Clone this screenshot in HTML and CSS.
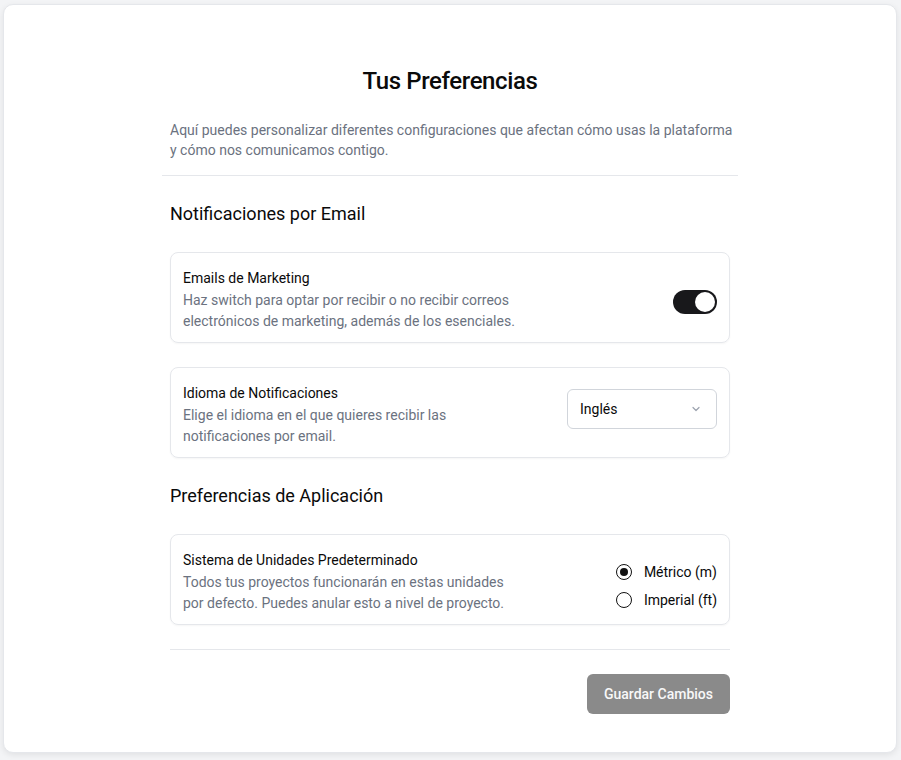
FILE: index.html
```html
<!DOCTYPE html>
<html lang="es">
<head>
<meta charset="utf-8">
<title>Tus Preferencias</title>
<link rel="stylesheet" href="styles.css">
</head>
<body>
<main class="panel">
  <header class="intro">
    <h1 class="title">Tus Preferencias</h1>
    <p class="lead">Aquí puedes personalizar diferentes configuraciones que afectan cómo usas la plataforma y cómo nos comunicamos contigo.</p>
  </header>
  <div class="content">
    <h2 class="section-title">Notificaciones por Email</h2>
    <div class="card">
      <div class="card-text">
        <div class="card-title">Emails de Marketing</div>
        <p class="card-desc">Haz switch para optar por recibir o no recibir correos electrónicos de marketing, además de los esenciales.</p>
      </div>
      <div class="toggle"><span class="knob"></span></div>
    </div>
    <div class="card">
      <div class="card-text">
        <div class="card-title">Idioma de Notificaciones</div>
        <p class="card-desc">Elige el idioma en el que quieres recibir las notificaciones por email.</p>
      </div>
      <div class="select">
        <span>Inglés</span>
        <svg class="chev" width="12" height="12" viewBox="0 0 12 12"><path d="M3 4.5 L6 7.5 L9 4.5" fill="none" stroke="#9ca3af" stroke-width="1.2" stroke-linecap="round" stroke-linejoin="round"/></svg>
      </div>
    </div>
    <h2 class="section-title">Preferencias de Aplicación</h2>
    <div class="card">
      <div class="card-text">
        <div class="card-title">Sistema de Unidades Predeterminado</div>
        <p class="card-desc">Todos tus proyectos funcionarán en estas unidades por defecto. Puedes anular esto a nivel de proyecto.</p>
      </div>
      <div class="radios">
        <div class="radio-row"><span class="radio checked"></span><span>Métrico (m)</span></div>
        <div class="radio-row"><span class="radio"></span><span>Imperial (ft)</span></div>
      </div>
    </div>
    <div class="actions">
      <button class="save">Guardar Cambios</button>
    </div>
  </div>
</main>
</body>
</html>
```
FILE: styles.css
```css
* { box-sizing: border-box; }
html, body { margin: 0; }
body {
  background: #f3f4f6;
  padding: 4px 4px 8px 3px;
  font-family: Roboto, "Liberation Sans", Arial, sans-serif;
  color: #111827;
}
.panel {
  background: #fff;
  border: 1px solid #e5e7eb;
  border-radius: 10px;
  box-shadow: 0 2px 6px rgba(0,0,0,0.08);
  padding: 60px 0 38px;
  min-height: 748px;
}
.intro {
  width: 576px;
  margin: 0 auto;
  border-bottom: 1px solid #e5e7eb;
  padding: 0 0 15px 8px;
}
.title {
  margin: 0;
  padding-right: 8px;
  text-align: center;
  font-size: 24px;
  line-height: 32px;
  font-weight: 500;
  letter-spacing: -0.4px;
  color: #0a0a0a;
}
.lead {
  margin: 23px 0 0;
  font-size: 14px;
  line-height: 20px;
  color: #6b7280;
}
.content {
  width: 560px;
  margin: 0 auto;
  display: flex;
  flex-direction: column;
  gap: 24px;
  padding-top: 24px;
}
.section-title {
  margin: 0;
  font-size: 18px;
  line-height: 28px;
  font-weight: 400;
  color: #0a0a0a;
}
.card {
  border: 1px solid #e5e7eb;
  border-radius: 8px;
  box-shadow: 0 1px 2px rgba(0,0,0,0.04);
  padding: 15px 12px 10px;
  display: flex;
  justify-content: space-between;
  align-items: flex-start;
}
.card-text { max-width: 336px; }
.card-title {
  font-size: 14px;
  line-height: 20px;
  font-weight: 400;
  color: #0a0a0a;
}
.card-desc {
  margin: 2px 0 0;
  font-size: 14px;
  line-height: 21px;
  color: #6b7280;
}
.toggle {
  width: 44px;
  height: 24px;
  border-radius: 12px;
  background: #18181b;
  position: relative;
  margin-top: 22px;
}
.knob {
  position: absolute;
  right: 2px;
  top: 2px;
  width: 20px;
  height: 20px;
  border-radius: 50%;
  background: #fff;
}
.select {
  margin-top: 6px;
  width: 150px;
  height: 40px;
  border: 1px solid #d1d5db;
  border-radius: 6px;
  display: flex;
  align-items: center;
  justify-content: space-between;
  padding: 0 14px 0 12px;
  font-size: 14px;
  color: #0a0a0a;
}
.chev { display: block; }
.radios {
  margin-top: 12px;
  display: flex;
  flex-direction: column;
  gap: 8px;
}
.radio-row {
  display: flex;
  align-items: center;
  gap: 12px;
  height: 20px;
  font-size: 14px;
  color: #0a0a0a;
}
.radio {
  width: 16px;
  height: 16px;
  border: 1.5px solid #111;
  border-radius: 50%;
  display: flex;
  align-items: center;
  justify-content: center;
}
.radio.checked::after {
  content: "";
  width: 8px;
  height: 8px;
  border-radius: 50%;
  background: #111;
}
.actions {
  border-top: 1px solid #e5e7eb;
  padding-top: 24px;
  display: flex;
  justify-content: flex-end;
}
.save {
  width: 143px;
  height: 40px;
  border: none;
  border-radius: 6px;
  background: #8a8a8a;
  color: #f8f8f8;
  font-family: inherit;
  font-size: 14px;
  font-weight: 500;
}
```
